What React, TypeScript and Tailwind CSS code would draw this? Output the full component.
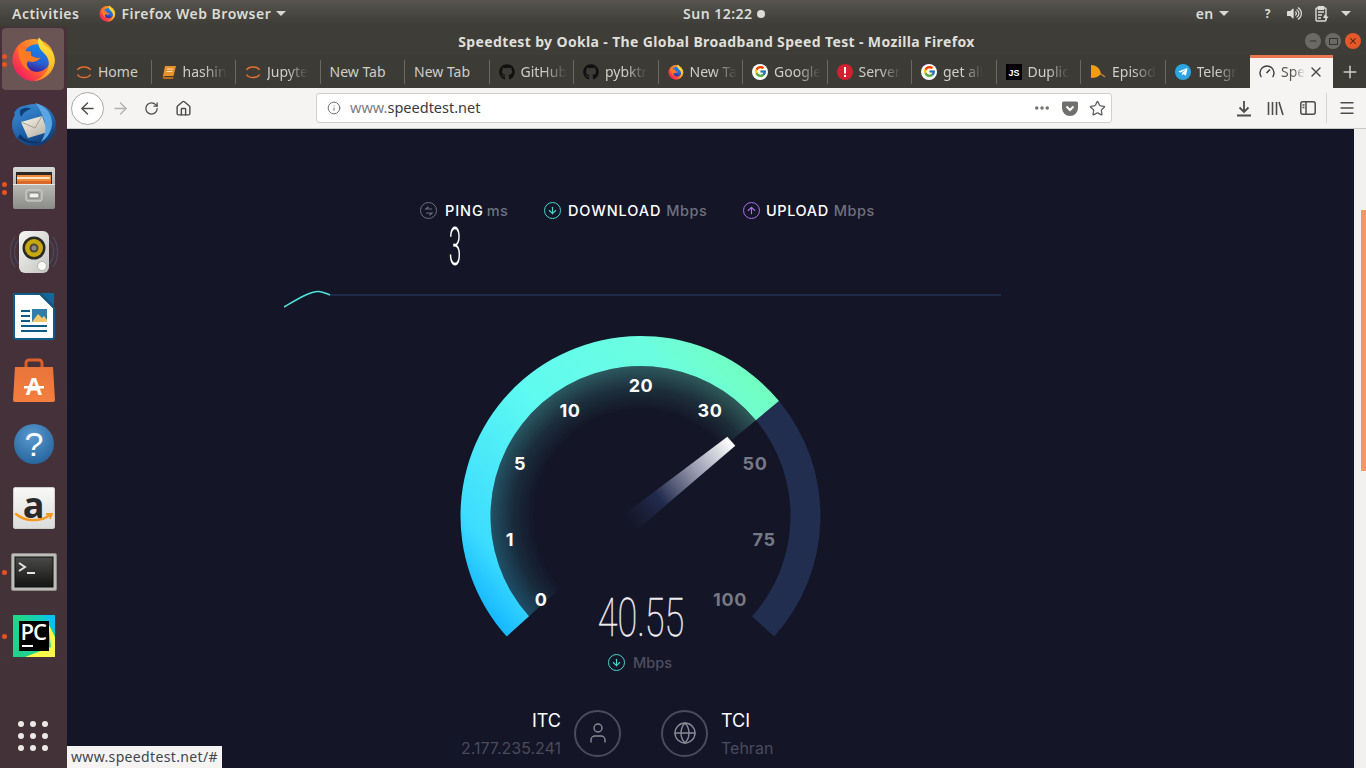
import type { ReactNode } from 'react';
import {
  ArrowLeft,
  ArrowRight,
  ArrowDown,
  ArrowUp,
  Ellipsis,
  Globe,
  Home,
  Info,
  Menu,
  Plus,
  RotateCw,
  Star,
  User,
  X,
  Minus,
} from 'lucide-react';
import { FaGithub, FaTelegramPlane, FaVolumeUp } from 'react-icons/fa';
import { FcGoogle } from 'react-icons/fc';

const CX = 640.5;
const CY = 516;

function pt(r: number, deg: number) {
  const a = (deg * Math.PI) / 180;
  return `${(CX + r * Math.sin(a)).toFixed(2)} ${(CY - r * Math.cos(a)).toFixed(2)}`;
}

function sector(r1: number, r2: number, from: number, to: number) {
  const large = to - from > 180 ? 1 : 0;
  return `M${pt(r1, from)} A${r1} ${r1} 0 ${large} 1 ${pt(r1, to)} L${pt(r2, to)} A${r2} ${r2} 0 ${large} 0 ${pt(r2, from)} Z`;
}

/* ---------- logos ---------- */

function FirefoxLogo({ size, id }: { size: number; id: string }) {
  return (
    <svg width={size} height={size} viewBox="0 0 48 48">
      <defs>
        <linearGradient id={`${id}-base`} x1="0.85" y1="0.1" x2="0.15" y2="0.8">
          <stop offset="0" stopColor="#ffb52a" />
          <stop offset="0.55" stopColor="#ff6a2b" />
          <stop offset="1" stopColor="#f5265a" />
        </linearGradient>
        <linearGradient id={`${id}-blue`} x1="0.7" y1="0" x2="0.4" y2="1">
          <stop offset="0" stopColor="#0f8cf2" />
          <stop offset="0.65" stopColor="#2a5fd0" />
          <stop offset="1" stopColor="#3b1f9a" />
        </linearGradient>
        <linearGradient id={`${id}-flame`} x1="0.5" y1="0" x2="0.5" y2="1">
          <stop offset="0" stopColor="#ffe83f" />
          <stop offset="0.6" stopColor="#ffc42e" />
          <stop offset="1" stopColor="#ff8a1f" />
        </linearGradient>
      </defs>
      <circle cx="23.5" cy="25" r="22" fill={`url(#${id}-base)`} />
      <circle cx="27" cy="23" r="14.5" fill={`url(#${id}-blue)`} />
      <path
        d="M29 1.5C33 5 33 8 36.5 10.5 42.5 14.5 46.5 20.5 45.5 28 44 38 35 46 24 47 33 44 39.5 37 39.5 28.5 39.5 21 33 17 30.5 13.5 28 9.5 27.5 5 29 1.5Z"
        fill={`url(#${id}-flame)`}
      />
      <path
        d="M8 9C9 13 12 13 15 12.5 13.5 15 16 17 20 16 22 18 20 20 22 21 25 22 28 24 31 22 28 27.5 22 28 18 26 15 29 17 33 21 36 13 36 6 22 8 9Z"
        fill="#ff7b22"
      />
    </svg>
  );
}

function Thunderbird() {
  return (
    <svg width="46" height="46" viewBox="0 0 46 46">
      <defs>
        <linearGradient id="tb-blue" x1="0.2" y1="0" x2="0.7" y2="1">
          <stop offset="0" stopColor="#3f8fd6" />
          <stop offset="0.6" stopColor="#1c5fa8" />
          <stop offset="1" stopColor="#12366e" />
        </linearGradient>
        <linearGradient id="tb-mail" x1="0" y1="0" x2="0.8" y2="1">
          <stop offset="0" stopColor="#fbf7ee" />
          <stop offset="1" stopColor="#b9b2a5" />
        </linearGradient>
      </defs>
      <ellipse cx="23" cy="24" rx="22" ry="21" fill="url(#tb-blue)" />
      <path d="M10 21 L31 15 L37 31 L17 37 Z" fill="url(#tb-mail)" />
      <path d="M10 21 L24 27 L31 15" fill="none" stroke="#a69f92" strokeWidth="1" />
      <path d="M3 12C8 3 17 3 23 8 18 9 12 13 11 20 7 19 5 16 3 12Z" fill="#2f7cc6" />
      <path d="M9 9.5C12 6.5 17 6 20 8 15 9 11 13 10.5 16 9 14 8.5 12 9 9.5Z" fill="#123f78" />
      <path d="M24 2C33 4 42 12 41 24 40 32 35 38 30 41 35 33 36 25 32 16 30 11 28 6 24 2Z" fill="#5aa6e3" />
      <path d="M7 37C14 42 22 44 30 41 22 41 14 40 9 33Z" fill="#0f3468" />
    </svg>
  );
}

function Files() {
  return (
    <svg width="44" height="44" viewBox="0 0 44 44">
      <defs>
        <linearGradient id="fc-body" x1="0" y1="0" x2="0" y2="1">
          <stop offset="0" stopColor="#d9d9d6" />
          <stop offset="1" stopColor="#8b8b87" />
        </linearGradient>
      </defs>
      <rect x="1" y="1" width="42" height="42" rx="2" fill="url(#fc-body)" />
      <rect x="4" y="6" width="36" height="12" fill="#2b2724" />
      <rect x="5" y="9" width="34" height="9" fill="#ee8a3c" />
      <rect x="5" y="11" width="33" height="2" fill="#fde3bd" />
      <rect x="5" y="15" width="34" height="3" fill="#d9692a" />
      <rect x="1" y="18" width="42" height="1" fill="#e9e9e6" />
      <rect x="14" y="24" width="16" height="11" rx="2" fill="#a8a8a4" stroke="#d6d6d2" />
      <rect x="17" y="27" width="10" height="5" rx="1" fill="#efefec" stroke="#55544f" strokeWidth="0.7" />
    </svg>
  );
}

function Speaker() {
  return (
    <svg width="48" height="44" viewBox="0 0 48 44">
      <defs>
        <linearGradient id="sp-body" x1="0" y1="0" x2="1" y2="1">
          <stop offset="0" stopColor="#f6f6f2" />
          <stop offset="1" stopColor="#c2c4bf" />
        </linearGradient>
      </defs>
      <g fill="none" stroke="#4d6a8e" strokeOpacity="0.45" strokeWidth="1.2">
        <path d="M9 10C3 16 3 28 9 34" />
        <path d="M5 7C-1 15 -1 29 5 37" />
        <path d="M39 10C45 16 45 28 39 34" />
        <path d="M43 7C49 15 49 29 43 37" />
      </g>
      <rect x="9" y="1" width="30" height="42" rx="6" fill="url(#sp-body)" />
      <circle cx="24" cy="18" r="11.5" fill="#2a2924" />
      <circle cx="24" cy="18" r="9" fill="#c9a80f" />
      <circle cx="24" cy="18" r="4.5" fill="#4c4a3c" />
      <circle cx="24" cy="18" r="2.5" fill="#8b8a84" />
      <circle cx="32" cy="36" r="4.5" fill="#fafaf7" stroke="#b2b3ae" />
    </svg>
  );
}

function Writer() {
  return (
    <svg width="42" height="48" viewBox="0 0 42 48">
      <path d="M1 2H27L41 16V45A2 2 0 0 1 39 47H3A2 2 0 0 1 1 45Z" fill="#fff" stroke="#0f5a86" strokeWidth="2" />
      <path d="M28 1H40A1 1 0 0 1 41 2V14Z" fill="#0f6a9a" />
      <g fill="#0f5a86">
        <rect x="8" y="18" width="9" height="2" />
        <rect x="8" y="23" width="9" height="2" />
        <rect x="8" y="28" width="9" height="2" />
        <rect x="8" y="33" width="26" height="2" />
        <rect x="8" y="38" width="26" height="2" />
      </g>
      <rect x="19" y="17" width="15" height="13" fill="#2f7da8" />
      <path d="M19 30L25 22 29 26 31 24 34 28V30Z" fill="#f2c86b" />
    </svg>
  );
}

function Software() {
  return (
    <svg width="44" height="46" viewBox="0 0 44 46">
      <defs>
        <linearGradient id="sw-bag" x1="0" y1="0" x2="0" y2="1">
          <stop offset="0" stopColor="#e9743a" />
          <stop offset="1" stopColor="#f27f3f" />
        </linearGradient>
      </defs>
      <path d="M14 12V6A3 3 0 0 1 17 3H27A3 3 0 0 1 30 6V12" fill="none" stroke="#d9602a" strokeWidth="3" />
      <path d="M3 10H41L43 43A2 2 0 0 1 41 45H3A2 2 0 0 1 1 43Z" fill="url(#sw-bag)" />
      <text x="22" y="38" textAnchor="middle" fontSize="24" fontWeight="700" fill="#fff" className="font-['Liberation_Sans',sans-serif]">
        A
      </text>
      <rect x="12" y="29" width="20" height="2.5" fill="#fff" />
    </svg>
  );
}

function Help() {
  return (
    <svg width="42" height="42" viewBox="0 0 42 42">
      <defs>
        <radialGradient id="hp" cx="0.45" cy="0.3" r="0.8">
          <stop offset="0" stopColor="#5b9ad0" />
          <stop offset="1" stopColor="#1f5f97" />
        </radialGradient>
      </defs>
      <circle cx="21" cy="21" r="20" fill="url(#hp)" />
      <text x="21" y="33" textAnchor="middle" fontSize="34" fontWeight="400" fill="#fff" className="font-['Liberation_Sans',sans-serif]">
        ?
      </text>
    </svg>
  );
}

function Amazon() {
  return (
    <div className="relative w-[42px] h-[42px] rounded-[2px] border border-[#cfcfcc] bg-gradient-to-b from-[#f8f8f7] to-[#dddddb] flex justify-center">
      <span className="text-[36px] leading-[34px] font-bold text-[#2a2a2a] font-['Open_Sans',sans-serif]">a</span>
      <svg className="absolute left-0 top-0" width="40" height="40" viewBox="0 0 40 40">
        <path d="M2 26C11 34 27 34 36 27" fill="none" stroke="#f59a1e" strokeWidth="2.4" strokeLinecap="round" />
        <path d="M32 26H38L36 31" fill="none" stroke="#f59a1e" strokeWidth="1.8" />
      </svg>
    </div>
  );
}

function Terminal() {
  return (
    <svg width="46" height="38" viewBox="0 0 46 38">
      <defs>
        <linearGradient id="tm" x1="0" y1="0" x2="0" y2="1">
          <stop offset="0" stopColor="#4a4a48" />
          <stop offset="1" stopColor="#141413" />
        </linearGradient>
      </defs>
      <rect x="0.5" y="0.5" width="45" height="37" rx="1.5" fill="#bcbcb8" stroke="#8e8e8a" />
      <rect x="4" y="4" width="38" height="30" fill="url(#tm)" stroke="#111" />
      <polyline points="8,10 14,14 8,18" fill="none" stroke="#e4e4e0" strokeWidth="2" />
      <rect x="16" y="19" width="8" height="2" fill="#e4e4e0" />
    </svg>
  );
}

function PyCharm() {
  return (
    <svg width="42" height="42" viewBox="0 0 42 42">
      <defs>
        <linearGradient id="pc" x1="0" y1="1" x2="1" y2="0">
          <stop offset="0" stopColor="#20d18d" />
          <stop offset="0.55" stopColor="#21d789" />
          <stop offset="1" stopColor="#07c3f2" />
        </linearGradient>
      </defs>
      <rect width="42" height="42" fill="url(#pc)" />
      <path d="M12 42H42V22L35 8 38 32Z" fill="#fcf84a" />
      <path d="M24 0H31L42 16V0Z" fill="#07c3f2" />
      <rect x="6" y="6" width="30" height="30" fill="#000" />
      <text x="7.5" y="25" fontSize="22" fontWeight="600" fill="#fff" letterSpacing="-1" className="font-['Open_Sans',sans-serif]">
        PC
      </text>
      <rect x="9" y="30" width="11" height="2" fill="#fff" />
    </svg>
  );
}

/* ---------- tab icons ---------- */

function JupyterIcon() {
  return (
    <svg width="16" height="16" viewBox="0 0 16 16" fill="none" stroke="#e46e2e" strokeWidth="1.6">
      <path d="M1.5 6C3.5 2 12.5 2 14.5 6" />
      <path d="M1.5 10.5C3.5 14.5 12.5 14.5 14.5 10.5" />
    </svg>
  );
}

function BookIcon() {
  return (
    <svg width="16" height="16" viewBox="0 0 16 16">
      <path d="M4 2H15L12.5 12H2Z" fill="#e8912a" />
      <path d="M2 12C1 15 3 15 3 15H12L12.6 13H4C3 13 3 12 4 12" fill="#b86a14" />
      <path d="M6 5H12M5.5 7.5H11.5" stroke="#fbe0b4" strokeWidth="1" />
    </svg>
  );
}

function ServerIcon() {
  return (
    <svg width="16" height="16" viewBox="0 0 16 16">
      <circle cx="8" cy="8" r="8" fill="#d3222f" />
      <rect x="7" y="3" width="2" height="6.5" fill="#fff" />
      <rect x="7" y="11" width="2" height="2" fill="#fff" />
    </svg>
  );
}

function GoogleIcon() {
  return (
    <div className="w-4 h-4 rounded-full bg-white flex items-center justify-center">
      <FcGoogle size={13} />
    </div>
  );
}

function JsIcon() {
  return (
    <div className="w-4 h-4 bg-black text-white text-[9px] font-bold leading-none flex items-end justify-end pr-[2px] pb-[2px] font-['Liberation_Sans',sans-serif]">
      JS
    </div>
  );
}

function EpisodeIcon() {
  return (
    <svg width="16" height="16" viewBox="0 0 16 16">
      <path d="M1 1C6 1 10 4 11 10 8 13 5 14 1 14Z" fill="#f39c12" />
      <path d="M11 10L15 13" stroke="#c8892b" strokeWidth="1.4" />
    </svg>
  );
}

function TelegramIcon() {
  return (
    <div className="w-4 h-4 rounded-full bg-[#2ca5e0] text-white flex items-center justify-center">
      <FaTelegramPlane size={10} />
    </div>
  );
}

function GaugeIcon() {
  return (
    <svg width="16" height="16" viewBox="0 0 16 16" fill="none" stroke="#3d3d3d" strokeWidth="1.4">
      <path d="M2.4 13.2A7 7 0 1 1 13.6 13.2" />
      <path d="M7.5 9L11 5.5" strokeWidth="1.6" />
    </svg>
  );
}

const tabs: { label: string; icon?: ReactNode; fade?: boolean }[] = [
  { label: 'Home', icon: <JupyterIcon /> },
  { label: 'hashin', icon: <BookIcon />, fade: true },
  { label: 'Jupyte', icon: <JupyterIcon />, fade: true },
  { label: 'New Tab' },
  { label: 'New Tab' },
  { label: 'GitHub', icon: <FaGithub size={16} color="#111" />, fade: true },
  { label: 'pybktr', icon: <FaGithub size={16} color="#111" />, fade: true },
  { label: 'New Ta', icon: <FirefoxLogo size={16} id="ff-tab" />, fade: true },
  { label: 'Google', icon: <GoogleIcon />, fade: true },
  { label: 'Server', icon: <ServerIcon />, fade: true },
  { label: 'get all', icon: <GoogleIcon />, fade: true },
  { label: 'Duplic', icon: <JsIcon />, fade: true },
  { label: 'Episod', icon: <EpisodeIcon />, fade: true },
  { label: 'Telegr', icon: <TelegramIcon />, fade: true },
];

const dockItems: { icon: ReactNode; dots: number; active?: boolean }[] = [
  { icon: <FirefoxLogo size={46} id="ff-dock" />, dots: 2, active: true },
  { icon: <Thunderbird />, dots: 0 },
  { icon: <Files />, dots: 2 },
  { icon: <Speaker />, dots: 0 },
  { icon: <Writer />, dots: 0 },
  { icon: <Software />, dots: 0 },
  { icon: <Help />, dots: 0 },
  { icon: <Amazon />, dots: 0 },
  { icon: <Terminal />, dots: 1 },
  { icon: <PyCharm />, dots: 1 },
];

function Caret({ className }: { className: string }) {
  return <span className={`block w-0 h-0 border-x-[5px] border-x-transparent border-t-[5px] border-t-[#d8d8d3] ${className}`} />;
}

function TopBar() {
  return (
    <div className="h-[27px] shrink-0 grid grid-cols-[683px_auto_1fr] items-center bg-gradient-to-b from-[#56544d] to-[#3c3b36] text-[#dcdcd6] text-[14px] font-semibold tracking-[0.5px] font-['Noto_Sans',sans-serif]">
      <div className="flex items-center pl-3">
        <span>Activities</span>
        <span className="ml-[20px]">
          <FirefoxLogo size={17} id="ff-top" />
        </span>
        <span className="ml-[5px]">Firefox Web Browser</span>
        <Caret className="ml-[5px]" />
      </div>
      <div className="flex items-center gap-[4px]">
        <span>Sun 12:22</span>
        <span className="w-2 h-2 rounded-full bg-[#dcdcd6]" />
      </div>
      <div className="flex items-center justify-end pr-[15px]">
        <span>en</span>
        <Caret className="ml-[5px] mr-[36px]" />
        <span className="text-[12px] font-bold mr-[16px]">?</span>
        <FaVolumeUp size={15} />
        <svg className="ml-[13px]" width="14" height="16" viewBox="0 0 14 16" fill="none" stroke="#dcdcd6" strokeWidth="1.4">
          <rect x="1" y="2" width="10" height="13" rx="1" />
          <rect x="3.5" y="0.7" width="5" height="2.6" fill="#dcdcd6" />
          <path d="M3 6H9M3 9H7M3 12H6" />
          <path d="M10 8L8 12H11L10 15.5 13.5 10.5H11Z" fill="#dcdcd6" stroke="none" />
        </svg>
        <Caret className="ml-[12px]" />
      </div>
    </div>
  );
}

function Dock() {
  return (
    <aside className="w-[67px] shrink-0 flex flex-col bg-gradient-to-b from-[#47303a] to-[#433339] pt-px pb-[17px]">
      {dockItems.map((item, i) => (
        <div key={i} className={`relative h-[64px] flex items-center justify-center ${item.active ? 'pb-[3px]' : ''}`}>
          {item.active && <div className="absolute left-[2px] top-0 w-[62px] h-[62px] rounded-[4px] bg-[#6a5454]" />}
          <div className="relative">{item.icon}</div>
          {item.dots > 0 && (
            <div className="absolute left-[2px] top-0 bottom-0 flex flex-col justify-center gap-[3px]">
              {Array.from({ length: item.dots }).map((_, d) => (
                <span key={d} className="w-[5px] h-[5px] rounded-full bg-[#e9531f]" />
              ))}
            </div>
          )}
        </div>
      ))}
      <div className="mt-auto grid grid-cols-3 gap-[6px] w-[30px] ml-[18px]">
        {Array.from({ length: 9 }).map((_, i) => (
          <span key={i} className="w-[6px] h-[6px] rounded-full bg-[#ece9e6]" />
        ))}
      </div>
    </aside>
  );
}

function TitleBar() {
  return (
    <div className="h-[28px] shrink-0 grid grid-cols-[1fr_auto_1fr] items-center bg-[#3f3d38] text-[#dfdfda] text-[14px] font-bold tracking-[0.36px] font-['Noto_Sans',sans-serif]">
      <div />
      <div>Speedtest by Ookla - The Global Broadband Speed Test - Mozilla Firefox</div>
      <div className="flex justify-end items-center gap-[4px] pr-[5px]">
        <span className="w-4 h-4 rounded-full bg-[#6c6a64] flex items-center justify-center text-[#35342f]">
          <Minus size={10} strokeWidth={2.5} />
        </span>
        <span className="w-4 h-4 rounded-full bg-[#6c6a64] flex items-center justify-center">
          <span className="w-[9px] h-[7px] border border-[#35342f]" />
        </span>
        <span className="w-4 h-4 rounded-full bg-[#e4582a] flex items-center justify-center text-[#4a2412]">
          <X size={10} strokeWidth={2.5} />
        </span>
      </div>
    </div>
  );
}

function TabStrip() {
  return (
    <div className="h-[33px] shrink-0 flex bg-[#3c3b36] text-[14px] text-[#cfcec9] font-['Noto_Sans',sans-serif]">
      {tabs.map((tab, i) => (
        <div key={i} className="relative w-[84.5px] flex items-center pl-[9px] pr-[10px]">
          {tab.icon && <span className="w-4 h-4 mr-[6px] shrink-0 flex items-center justify-center">{tab.icon}</span>}
          <span className={tab.fade ? 'whitespace-nowrap [mask-image:linear-gradient(to_right,black_50%,transparent)]' : 'whitespace-nowrap'}>
            {tab.label}
          </span>
          {i < 13 && <span className="absolute right-0 top-[5px] bottom-[4px] w-px bg-[#6b6964]" />}
        </div>
      ))}
      <div className="w-[83px] h-[33px] bg-[#f5f4f2] border-t-[3px] border-[#ea7650] flex items-center pl-[9px] pr-[9px] pb-[3px] text-[#55544f]">
        <GaugeIcon />
        <span className="ml-[6px] whitespace-nowrap [mask-image:linear-gradient(to_right,black_50%,transparent)]">Spe</span>
        <X size={16} className="ml-auto text-[#4a4a48]" />
      </div>
      <div className="flex-1 flex items-center justify-center text-[#cfcec9]">
        <Plus size={20} strokeWidth={1.8} />
      </div>
    </div>
  );
}

function NavBar() {
  return (
    <div className="h-[41px] shrink-0 flex items-center bg-[#f5f4f2] border-b border-[#c8c7c3] text-[#4c4c4a] font-['Noto_Sans',sans-serif]">
      <div className="ml-[4px] w-[33px] h-[33px] rounded-full bg-white border border-[#a8a8a6] flex items-center justify-center">
        <ArrowLeft size={19} strokeWidth={1.8} />
      </div>
      <ArrowRight size={19} strokeWidth={1.6} className="ml-[7px] text-[#b0b0ae]" />
      <RotateCw size={15} strokeWidth={2} className="ml-[14px]" />
      <Home size={17} strokeWidth={2} className="ml-[16px]" />
      <div className="ml-[124px] w-[796px] h-[30px] rounded-[3px] bg-white border border-[#cfcfcd] flex items-center text-[14.5px] pr-[5px]">
        <Info size={14} strokeWidth={1.6} className="ml-[10px] text-[#6a6a68]" />
        <span className="ml-[9px] text-[#7d7d80]">www.</span>
        <span className="text-[#3a3a3c]">speedtest.net</span>
        <Ellipsis size={18} strokeWidth={2.6} className="ml-auto text-[#6d6d6b]" />
        <svg className="ml-[11px]" width="16" height="15" viewBox="0 0 16 15">
          <path d="M1.5 0.5H14.5A1.5 1.5 0 0 1 16 2V7A8 8 0 0 1 0 7V2A1.5 1.5 0 0 1 1.5 0.5Z" fill="#6f6f6d" />
          <path d="M4.5 5.5L8 9L11.5 5.5" fill="none" stroke="#fff" strokeWidth="2" />
        </svg>
        <Star size={17} strokeWidth={1.8} className="ml-[11px] text-[#5f5f5d]" />
      </div>
      <svg className="ml-[124px]" width="16" height="17" viewBox="0 0 16 17" stroke="#4c4c4a" strokeWidth="1.8" fill="none">
        <path d="M8 1V12M3.5 7.5L8 12 12.5 7.5M1 15.5H15" />
      </svg>
      <svg className="ml-[15px]" width="17" height="15" viewBox="0 0 17 15" stroke="#4c4c4a" strokeWidth="1.6" fill="none">
        <path d="M1.5 1V14M5.5 1V14M9.5 1V14M12 1L16 14" />
      </svg>
      <svg className="ml-[16px]" width="16" height="14" viewBox="0 0 16 14" stroke="#4c4c4a" strokeWidth="1.5" fill="none">
        <rect x="0.8" y="0.8" width="14.4" height="12.4" rx="2" />
        <path d="M6 1V13M2.5 4H4.5M2.5 6.5H4.5" />
      </svg>
      <span className="ml-[10px] w-px h-[30px] bg-[#d4d3d0]" />
      <Menu size={18} strokeWidth={1.8} className="ml-[11px]" />
    </div>
  );
}

function Gauge() {
  const ticks = [
    { t: '0', x: 541, y: 600, on: true },
    { t: '1', x: 510, y: 540, on: true },
    { t: '5', x: 520, y: 464, on: true },
    { t: '10', x: 570, y: 411, on: true },
    { t: '20', x: 641, y: 386, on: true },
    { t: '30', x: 710, y: 411, on: true },
    { t: '50', x: 755, y: 464, on: false },
    { t: '75', x: 764, y: 540, on: false },
    { t: '100', x: 730, y: 600, on: false },
  ];
  return (
    <svg className="block ml-[170px] mt-[19px]" width="374" height="318" viewBox="454 330 374 318">
      <defs>
        <linearGradient id="arc" gradientUnits="userSpaceOnUse" x1="500" y1="640" x2="780" y2="400">
          <stop offset="0" stopColor="#10b2ff" />
          <stop offset="0.14" stopColor="#3cdcff" />
          <stop offset="0.5" stopColor="#5ffbf1" />
          <stop offset="0.82" stopColor="#6bfde0" />
          <stop offset="1" stopColor="#72ffbe" />
        </linearGradient>
        <radialGradient id="glow" gradientUnits="userSpaceOnUse" cx={CX} cy={CY} r="150">
          <stop offset="0.7" stopColor="#fff" stopOpacity="0" />
          <stop offset="0.85" stopColor="#fff" stopOpacity="0.11" />
          <stop offset="1" stopColor="#fff" stopOpacity="0.3" />
        </radialGradient>
        <mask id="glow-mask" maskUnits="userSpaceOnUse" x="454" y="330" width="374" height="318">
          <rect x="454" y="330" width="374" height="318" fill="url(#glow)" />
        </mask>
        <linearGradient id="needle" gradientUnits="userSpaceOnUse" x1="731" y1="441" x2="629" y2="523">
          <stop offset="0" stopColor="#ffffff" />
          <stop offset="0.35" stopColor="#9a9cb0" />
          <stop offset="0.7" stopColor="#212b4c" />
          <stop offset="1" stopColor="#212b4c" stopOpacity="0" />
        </linearGradient>
      </defs>
      <path d={sector(180, 150, 50.3, 132)} fill="#212e50" />
      <path d={sector(150, 100, -132, 50.3)} fill="url(#arc)" mask="url(#glow-mask)" />
      <path d={sector(180, 150, -132, 50.3)} fill="url(#arc)" />
      <polygon points="727.3,436.7 735.3,445.7 635,531.7 623.3,515" fill="url(#needle)" />
      {ticks.map((k) => (
        <text
          key={k.t}
          x={k.x}
          y={k.y + 5.5}
          textAnchor="middle"
          fontSize="18"
          fontWeight="700"
          letterSpacing="0.6"
          fill={k.on ? '#ffffff' : '#777885'}
          className="font-['Inter',sans-serif]"
        >
          {k.t}
        </text>
      ))}
      <text
        transform="translate(641 636) scale(0.68 1)"
        textAnchor="middle"
        fontSize="53"
        fontWeight="100"
        fill="#eeeef2"
        stroke="#eeeef2"
        strokeWidth="0.5"
        className="font-['Roboto',sans-serif]"
      >
        40.55
      </text>
    </svg>
  );
}

function HeadIcon({ color, children }: { color: string; children: ReactNode }) {
  return (
    <span
      className="w-[17px] h-[17px] rounded-full border-[1.5px] flex items-center justify-center"
      style={{ borderColor: color, color }}
    >
      {children}
    </span>
  );
}

function Speedtest() {
  return (
    <main className="flex-1 overflow-hidden bg-[#141526] font-['Inter',sans-serif]">
      <div className="ml-[217px] w-[720px] pt-[73px]">
        <div className="flex ml-[136px] text-[14.5px] font-medium leading-[17px] tracking-[0.9px]">
          <div className="flex items-center gap-[8px] w-[124px]">
            <HeadIcon color="#6f7080">
              <svg width="10" height="10" viewBox="0 0 10 10" fill="none" stroke="currentColor" strokeWidth="1.2">
                <path d="M8 3H2L4.5 0.8M2 7H8L5.5 9.2" />
              </svg>
            </HeadIcon>
            <span className="text-white">PING</span>
            <span className="text-[#6f7080] -ml-[5px] tracking-[0.5px]">ms</span>
          </div>
          <div className="flex items-center gap-[7px] w-[199px]">
            <HeadIcon color="#45d9d0">
              <ArrowDown size={11} strokeWidth={2.4} />
            </HeadIcon>
            <span className="text-white">DOWNLOAD</span>
            <span className="text-[#6f7080] -ml-[2px] tracking-[0.5px]">Mbps</span>
          </div>
          <div className="flex items-center gap-[6px]">
            <HeadIcon color="#b070e8">
              <ArrowUp size={11} strokeWidth={2.4} />
            </HeadIcon>
            <span className="text-white tracking-[0.6px]">UPLOAD</span>
            <span className="text-[#6f7080] -ml-[1px] tracking-[0.5px]">Mbps</span>
          </div>
        </div>

        <div className="ml-[156px] w-[30px] h-[66px] text-center text-[54px] leading-[56px] font-light text-white scale-x-[0.42] font-['Roboto',sans-serif]">
          3
        </div>

        <svg className="block" width="720" height="26" viewBox="284 285 720 26">
          <line x1="330" y1="295" x2="1001" y2="295" stroke="#1e2a48" strokeWidth="2" />
          <path d="M284 307C296 300 310 291 319 291.5 323 291.7 327 294 330 295" fill="none" stroke="#4fe3da" strokeWidth="1.6" />
        </svg>

        <Gauge />

        <div className="flex items-center ml-[324px] mt-[4px] gap-[8px] text-[14.5px] font-medium text-[#4d4e60]">
          <HeadIcon color="#45d9d0">
            <ArrowDown size={11} strokeWidth={2.4} />
          </HeadIcon>
          <span>Mbps</span>
        </div>

        <div className="flex mt-[36px] ml-[177px]">
          <div className="w-[100px] text-right">
            <div className="text-[18px] leading-[22px] text-white">ITC</div>
            <div className="text-[16px] leading-[22px] mt-[5px] text-[#4a4b5c]">2.177.235.241</div>
          </div>
          <div className="ml-[13px] w-[47px] h-[47px] rounded-full border-2 border-[#4a4b5c] flex items-center justify-center text-[#8a8a96]">
            <User size={24} strokeWidth={1.4} />
          </div>
          <div className="ml-[40px] w-[47px] h-[47px] rounded-full border-2 border-[#4a4b5c] flex items-center justify-center text-[#8a8a96]">
            <Globe size={24} strokeWidth={1.4} />
          </div>
          <div className="ml-[13px]">
            <div className="text-[18px] leading-[22px] text-white">TCI</div>
            <div className="text-[16px] leading-[22px] mt-[5px] text-[#4a4b5c]">Tehran</div>
          </div>
        </div>
      </div>
    </main>
  );
}

export default function App() {
  return (
    <div className="relative w-[1366px] h-[768px] overflow-hidden flex flex-col">
      <TopBar />
      <div className="flex-1 flex min-h-0">
        <Dock />
        <div className="flex-1 flex flex-col min-w-0">
          <TitleBar />
          <TabStrip />
          <NavBar />
          <div className="flex-1 flex min-h-0">
            <Speedtest />
            <div className="w-[12px] bg-[#f2f1ef] pl-[7px] pt-[81px]">
              <div className="w-[5px] h-[261px] bg-[#f2976c]" />
            </div>
          </div>
        </div>
      </div>
      <div className="absolute left-[67px] bottom-0 h-[22px] w-[155px] bg-[#f5f4f2] pl-[4px] text-[14px] tracking-[0.35px] leading-[22px] text-[#3f4650] whitespace-nowrap font-['Noto_Sans',sans-serif]">
        www.speedtest.net/#
      </div>
    </div>
  );
}
